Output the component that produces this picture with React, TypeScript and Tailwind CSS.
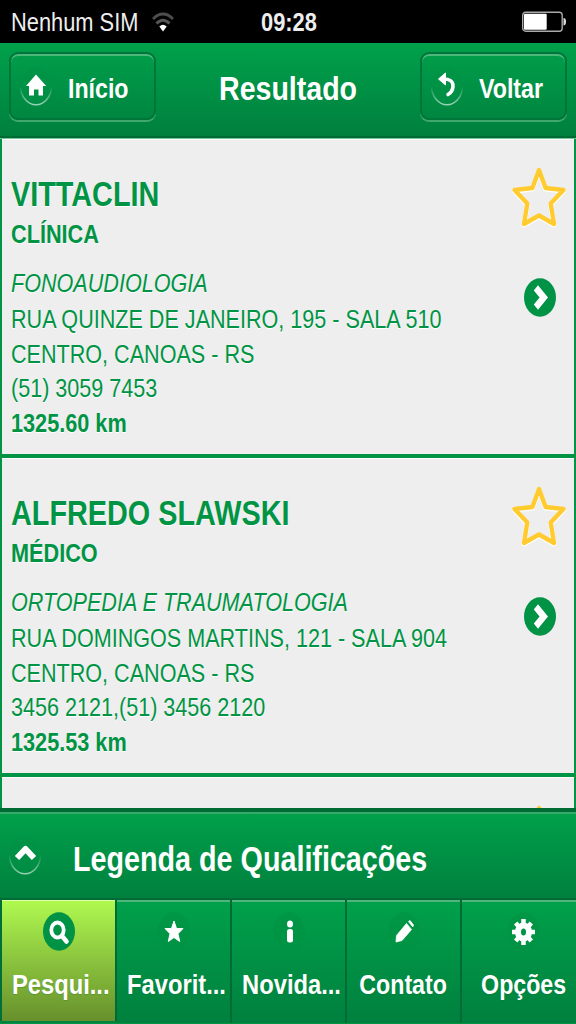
import type { ReactNode } from "react";

type Result = {
  name: string;
  kind: string;
  specialty: string;
  street: string;
  city: string;
  phone: string;
  distance: string;
};

const results: Result[] = [
  {
    name: "VITTACLIN",
    kind: "CLÍNICA",
    specialty: "FONOAUDIOLOGIA",
    street: "RUA QUINZE DE JANEIRO, 195 - SALA 510",
    city: "CENTRO, CANOAS - RS",
    phone: "(51) 3059 7453",
    distance: "1325.60 km",
  },
  {
    name: "ALFREDO SLAWSKI",
    kind: "MÉDICO",
    specialty: "ORTOPEDIA E TRAUMATOLOGIA",
    street: "RUA DOMINGOS MARTINS, 121 - SALA 904",
    city: "CENTRO, CANOAS - RS",
    phone: "3456 2121,(51) 3456 2120",
    distance: "1325.53 km",
  },
];

// All the labels use a slightly condensed face
const Narrow = ({ children }: { children: ReactNode }) => (
  <span className="block w-max origin-left scale-x-[0.84] whitespace-nowrap">
    {children}
  </span>
);

const StarOutline = () => (
  <svg width="56" height="64" viewBox="0 0 56 64" fill="none" aria-hidden="true">
    <path
      d="M28 5L34.6 23L52.5 25L39.7 38.5L43 59L28 50.5L13 59L16.3 38.5L3.5 25L21.4 23Z"
      stroke="#fff"
      strokeWidth="5"
      strokeLinejoin="round"
      transform="translate(0 1)"
    />
    <path
      d="M28 5L34.6 23L52.5 25L39.7 38.5L43 59L28 50.5L13 59L16.3 38.5L3.5 25L21.4 23Z"
      stroke="#ffcb2f"
      strokeWidth="4.4"
      strokeLinejoin="round"
    />
  </svg>
);

const ArrowCircle = () => (
  <svg width="32" height="39" viewBox="0 0 32 39" aria-hidden="true">
    <ellipse cx="16" cy="19.5" rx="16" ry="19.2" fill="#009245" />
    <path
      d="M9.8 12.5L14 7.3L24 19.5L14 31.7L9.8 26.5L15.6 19.5Z"
      fill="#fff"
    />
  </svg>
);

// Faint disc with a light lower edge, behind the header icons
const IconDisc = ({ children }: { children: ReactNode }) => (
  <svg width="34" height="42" viewBox="0 0 34 42" fill="none" aria-hidden="true">
    <defs>
      <linearGradient id="rim" x1="0" y1="0" x2="0" y2="1">
        <stop offset="0.5" stopColor="#fff" stopOpacity="0" />
        <stop offset="1" stopColor="#fff" stopOpacity="0.6" />
      </linearGradient>
    </defs>
    <ellipse cx="17" cy="21" rx="15.5" ry="18.5" fill="#009245" fillOpacity="0.5" />
    <ellipse cx="17" cy="21" rx="15.5" ry="18.7" stroke="url(#rim)" strokeWidth="1.5" />
    {children}
  </svg>
);

const StatusBar = () => (
  <div className="grid h-[43px] grid-cols-[261px_261px_1fr] items-center bg-black text-[26px] leading-[44px] text-[#eee]">
    <div className="flex items-center pl-[11px]">
      <div className="w-[141px]">
        <Narrow>Nenhum SIM</Narrow>
      </div>
      <svg width="22" height="21" viewBox="0 0 22 21" fill="none" aria-hidden="true">
        <path d="M1 7Q11 -3 21 7" stroke="#4d4d4d" strokeWidth="3" />
        <path d="M4.5 11.5Q11 5 17.5 11.5" stroke="#555" strokeWidth="3" />
        <path d="M7.3 14.6Q11 11 14.7 14.6L11 19.5Z" fill="#fff" />
      </svg>
    </div>
    <div className="font-bold">
      <Narrow>09:28</Narrow>
    </div>
    <svg width="46" height="22" viewBox="0 0 46 22" fill="none" aria-hidden="true">
      <rect x="0.7" y="1.2" width="39.5" height="19" rx="3" stroke="#aaa" strokeWidth="1.4" />
      <rect x="2" y="2.7" width="22.7" height="16" rx="1" fill="#fff" />
      <path d="M41.5 7Q44 7 44 10.7Q44 14.4 41.5 14.4Z" fill="#ddd" />
    </svg>
  </div>
);

const HeaderButton = ({ label, icon }: { label: string; icon: ReactNode }) => (
  <button
    type="button"
    className="flex h-[68px] w-[147px] items-center rounded-[9px] border-2 border-[#00753a] pl-[8px] text-left text-[27.6px] font-bold shadow-[0_2px_0_#40a86d,inset_0_2px_0_#4bb87a]"
  >
    {icon}
    <span className="ml-[15px] pt-[5px]">
      <Narrow>{label}</Narrow>
    </span>
  </button>
);

const Header = () => (
  <header className="flex h-[95px] items-start justify-between border-b-2 border-[#006b35] bg-linear-to-b from-[#00a14b] to-[#00803e] px-[9px] pt-[9px] text-white">
    <HeaderButton
      label="Início"
      icon={
        <IconDisc>
          <path d="M17 9.5L27.2 21H24V30.5H19.5V24.5H15V30.5H10V21H7Z" fill="#fff" />
        </IconDisc>
      }
    />
    <h1 className="mr-[-26px] pt-[17px] text-[34px] leading-[38px] font-bold">
      <Narrow>Resultado</Narrow>
    </h1>
    <HeaderButton
      label="Voltar"
      icon={
        <IconDisc>
          <path d="M12 14Q23.5 13.5 23 21.5Q22.5 27 18 29.5" stroke="#fff" strokeWidth="3.6" strokeLinecap="round" />
          <path d="M15.5 8V20L8.5 14Z" fill="#fff" stroke="#fff" strokeLinejoin="round" />
        </IconDisc>
      }
    />
  </header>
);

const ResultCard = ({ item }: { item: Result }) => (
  <li className="flex h-[319px] border-x-2 border-b-4 border-[#009444] bg-[#eee] pl-[9px] text-[25.7px] leading-[34.6px] text-[#009444] shadow-[inset_0_1px_0_#fff] text-shadow-[0_1px_0_#fff]">
    <div className="w-0 flex-1 pt-[35px]">
      <h2 className="text-[34.3px] leading-[40px] font-bold">
        <Narrow>{item.name}</Narrow>
      </h2>
      <div className="pt-[3px] text-[25.8px] font-bold">
        <Narrow>{item.kind}</Narrow>
      </div>
      <div className="pt-[14px] pb-[2px] italic">
        <Narrow>{item.specialty}</Narrow>
      </div>
      <Narrow>{item.street}</Narrow>
      <Narrow>{item.city}</Narrow>
      <Narrow>{item.phone}</Narrow>
      <div className="text-[25.8px] font-bold">
        <Narrow>{item.distance}</Narrow>
      </div>
    </div>
    <div className="flex w-[63px] shrink-0 flex-col pt-[26px]">
      <StarOutline />
      <div className="pt-[49px] pl-[13px]">
        <ArrowCircle />
      </div>
    </div>
  </li>
);

const tabs = [
  {
    label: "Pesqui...",
    icon: (
      <>
        <ellipse cx="14.5" cy="17" rx="6.2" ry="7.5" stroke="#fff" strokeWidth="3.8" />
        <path d="M19 23L23.5 28.5" stroke="#fff" strokeWidth="4.5" strokeLinecap="round" />
      </>
    ),
  },
  {
    label: "Favorit...",
    icon: (
      <path
        d="M16 8L18.5 15.5H25L20 20.7L21.7 28.5L16 24.500L10.300 28.500L12 20.700L7 15.500H13.500Z"
        fill="#fff"
        stroke="#fff"
        strokeLinejoin="round"
      />
    ),
  },
  {
    label: "Novida...",
    icon: (
      <>
        <ellipse cx="17" cy="11" rx="3" ry="3.5" fill="#fff" />
        <rect x="14" y="16" width="6" height="13.5" rx="2.5" fill="#fff" />
      </>
    ),
  },
  {
    label: "Contato",
    icon: (
      <path
        d="M18.5 10.5L23.5 16.5L14 27.5L8 29L8.5 22.5ZM20.5 8.500L22 7.500L25.500 12L24.800 14Z"
        fill="#fff"
        stroke="#fff"
        strokeWidth="0.8"
        strokeLinejoin="round"
      />
    ),
  },
  {
    label: "Opções",
    icon: (
      <>
        <ellipse cx="15.5" cy="19" rx="5.5" ry="6.5" stroke="#fff" strokeWidth="6" />
        <path
          d="M15.5 6V12M15.5 26V32M4 19H9M22 19H27M7.7 10L11.5 14.5M19.5 23.5L23.3 28M23.3 10L19.5 14.5M11.5 23.5L7.7 28"
          stroke="#fff"
          strokeWidth="4.5"
        />
      </>
    ),
  },
];

const TabBar = () => (
  <nav className="grid h-[125px] grid-cols-[117px_115px_115px_115px_114px] border-t-2 border-[#006b35] bg-[#008340]">
    {tabs.map((tab, index) => (
      <a
        key={tab.label}
        className={
          index === 0
            ? "mb-[2px] flex flex-col items-center border-x-2 border-[#007038] border-r-[#006b35] bg-linear-to-b from-[#b0fa50] to-[#67902c] pt-[12px] shadow-[inset_0_1px_0_#dcffa8]"
            : "flex flex-col items-center border-r-2 border-[#006b35] bg-linear-to-b from-[#00a14b] to-[#00803e] pt-[12px] shadow-[inset_0_2px_0_#4fb57c] last:border-r-0 last:pl-[9px]"
        }
      >
        <svg width="32" height="39" viewBox="0 0 32 39" fill="none" aria-hidden="true">
          <ellipse cx="16" cy="19.5" rx="16" ry="19.2" fill="#009245" fillOpacity={index === 0 ? 1 : 0.6} />
          <g transform="translate(0 1)">{tab.icon}</g>
        </svg>
        <span
          className={
            index < 3
              ? "mt-[16px] ml-[5px] block w-max origin-center scale-x-[0.86] text-[27.6px] leading-[36px] font-bold whitespace-nowrap text-white text-shadow-[0_1px_1px_#006b3540]"
              : "mt-[16px] ml-[2px] block w-max origin-center scale-x-[0.84] text-[27.6px] leading-[36px] font-bold whitespace-nowrap text-white text-shadow-[0_1px_1px_#006b3540] last:mr-[2px]"
          }
        >
          {tab.label}
        </span>
      </a>
    ))}
  </nav>
);

const App = () => {
  return (
    <div className="flex h-[1024px] w-[576px] flex-col overflow-hidden bg-[#009444] font-['Liberation_Sans',Arial,sans-serif]">
      <StatusBar />
      <Header />
      <ul className="h-[670px] shrink-0 overflow-hidden border-t border-[#72c797]">
        {results.map((item) => (
          <ResultCard key={item.name} item={item} />
        ))}
        <li className="flex h-[319px] justify-end border-x-2 border-[#009444] bg-[#eee] pt-[26px] pr-[7px] shadow-[inset_0_1px_0_#fff]">
          <StarOutline />
        </li>
      </ul>
      <div className="flex h-[90px] shrink-0 items-center border-t-4 border-[#006b35] bg-linear-to-b from-[#00a14b] to-[#00803e] pl-2 text-[34.2px] font-bold text-white shadow-[inset_0_2px_0_#36aa69]">
        <IconDisc>
          <path
            d="M9 24L17.5 15L26 24"
            stroke="#fff"
            strokeWidth="6"
            strokeLinejoin="round"
          />
        </IconDisc>
        <div className="ml-[31px] pt-[9px]">
          <Narrow>Legenda de Qualificações</Narrow>
        </div>
      </div>
      <TabBar />
    </div>
  );
};

export default App;
